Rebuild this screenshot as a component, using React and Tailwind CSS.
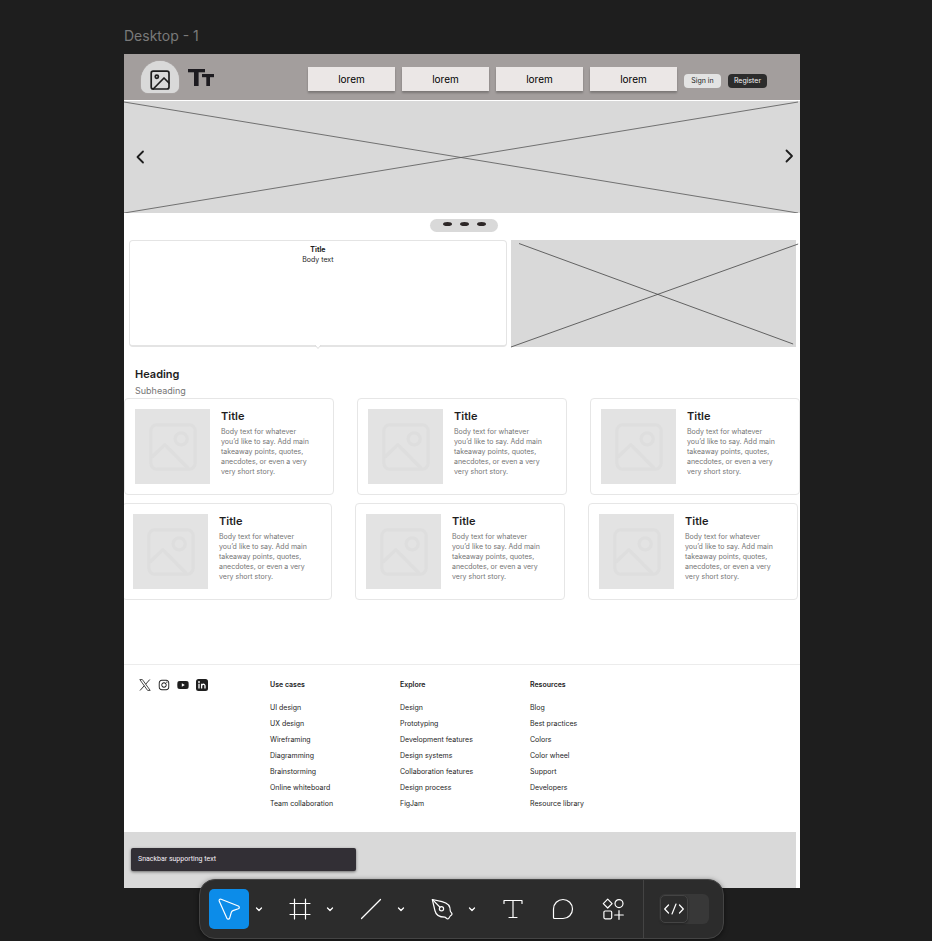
import React from "react";
import { FaInstagram, FaYoutube } from "react-icons/fa6";

const navItems = ["lorem", "lorem", "lorem", "lorem"];

const footerColumns = [
  {
    title: "Use cases",
    links: ["UI design", "UX design", "Wireframing", "Diagramming", "Brainstorming", "Online whiteboard", "Team collaboration"],
  },
  {
    title: "Explore",
    links: ["Design", "Prototyping", "Development features", "Design systems", "Collaboration features", "Design process", "FigJam"],
  },
  {
    title: "Resources",
    links: ["Blog", "Best practices", "Colors", "Color wheel", "Support", "Developers", "Resource library"],
  },
];

function Header() {
  return (
    <header className="flex h-[46px] items-center bg-[#a39e9d] pl-[17px] pr-[33px]">
      <div className="flex h-8 w-[38px] items-end justify-center rounded-t-[19px] rounded-b-[7px] bg-[#d9d9d9] pb-[1px] shadow-[0_0_1px_#d9d9d9]">
        <svg className="size-6" viewBox="0 0 24 24" fill="none" stroke="#1e1e1e" strokeWidth="1.7" strokeLinejoin="round" strokeLinecap="round">
          <rect x="3.2" y="3.2" width="17.8" height="17.8" rx="2" />
          <circle cx="8.8" cy="8.8" r="1.6" />
          <path d="M21 15l-5-5L5.200 21" />
        </svg>
      </div>
      <svg className="ml-[9px] h-[17px] w-[26px]" viewBox="0 0 26 17" fill="#1d1b20">
        <rect x="0" y="0" width="17" height="3.300" />
        <rect x="6" y="0" width="4.600" height="17" />
        <rect x="14" y="5" width="12" height="3.200" />
        <rect x="18.300" y="5" width="3.700" height="12" />
      </svg>
      <nav className="ml-auto mt-1 flex gap-[7px]">
        {navItems.map((label, i) => (
          <a key={i} href="#" className="flex h-6 w-[87px] items-center justify-center bg-[#ebe7e6] text-[10px] text-black shadow-[0_2px_2px_#00000040]">
            {label}
          </a>
        ))}
      </nav>
      <div className="ml-[7px] mt-2 flex gap-[7px]">
        <button className="h-[14px] w-[37px] rounded-[4px] bg-[#e3e3e3] text-[7px] leading-[14px] text-[#1e1e1e]">Sign in</button>
        <button className="h-[14px] w-[39px] rounded-[4px] bg-[#2c2c2c] text-[7px] leading-[14px] text-[#f5f5f5]">Register</button>
      </div>
    </header>
  );
}

function Banner() {
  return (
    <section className="relative mt-px flex h-[112px] items-center justify-between bg-[#d9d9d9] pl-2 pr-1">
      <svg className="absolute inset-0 h-full w-full" viewBox="0 0 676 112" preserveAspectRatio="none" stroke="#555" strokeWidth=".8">
        <path d="M0 1L674 112M0 112L674 1" vectorEffect="non-scaling-stroke" />
      </svg>
      <button aria-label="Previous" className="relative">
        <svg className="size-4" viewBox="0 0 16 16" fill="none" stroke="#1e1e1e" strokeWidth="1.800" strokeLinecap="round" strokeLinejoin="round">
          <path d="M11 2.500L5.500 8l5.500 5.500" />
        </svg>
      </button>
      <button aria-label="Next" className="relative">
        <svg className="size-4" viewBox="0 0 16 16" fill="none" stroke="#1e1e1e" strokeWidth="1.800" strokeLinecap="round" strokeLinejoin="round">
          <path d="M6.500 1.500L12 7L6.500 12.500" />
        </svg>
      </button>
    </section>
  );
}

function Pager() {
  return (
    <div className="flex h-[27px] justify-center pt-[6px] pl-1">
      <div className="flex h-[13px] w-[68px] justify-center gap-2 rounded-[8px] bg-[#d9d9d9] pt-[3px]">
        {[0, 1, 2].map((i) => (
          <span key={i} className="h-1 w-[9px] rounded-[50%] bg-[#2c2626]" />
        ))}
      </div>
    </div>
  );
}

function Feature() {
  return (
    <section className="flex h-[107px] gap-1 pl-[5px] pr-1">
      <div className="relative flex-[377] rounded-[4px] border border-b-2 border-[#e4e4e4] bg-white pt-1 text-center text-[#1e1e1e]">
        <h3 className="text-[7px] leading-[10px] font-bold">Title</h3>
        <p className="text-[7px] leading-[10px]">Body text</p>
        <svg className="absolute top-full left-1/2 h-1 w-2 -translate-x-1/2 overflow-visible" viewBox="0 0 8 4">
          <path d="M1 0L4 3.500L7 0" fill="#fff" stroke="#dedede" />
        </svg>
      </div>
      <div className="flex-[286] bg-[#d9d9d9]">
        <svg className="block h-full w-full overflow-visible" viewBox="0 0 285 107" preserveAspectRatio="none" stroke="#444" strokeWidth=".8">
          <path d="M8 3.500L282 104M0 107L287 4" vectorEffect="non-scaling-stroke" />
        </svg>
      </div>
    </section>
  );
}

function Card() {
  return (
    <article className="flex gap-[11px] rounded-[4px] border border-[#e6e6e6] bg-white py-[10px] pl-[10px]">
      <div className="flex size-[75px] shrink-0 items-center justify-center bg-[#e3e3e3]">
        <svg className="size-[56px]" viewBox="0 0 24 24" fill="none" stroke="#dedede" strokeWidth="1.400" strokeLinejoin="round">
          <rect x="2.500" y="2.500" width="19" height="19" rx="2.500" />
          <circle cx="15.500" cy="8.500" r="2.600" />
          <path d="M2.800 16.500L8.500 11L18.500 21.200" />
        </svg>
      </div>
      <div className="h-[75px] whitespace-nowrap">
        <h3 className="text-[11px] leading-[14px] font-semibold text-[#1e1e1e]">Title</h3>
        <p className="mt-1 text-[7px] leading-[10px] text-[#757575]">
          Body text for whatever<br />
          you’d like to say. Add main<br />
          takeaway points, quotes,<br />
          anecdotes, or even a very<br />
          very short story.
        </p>
      </div>
    </article>
  );
}

function Cards() {
  return (
    <section className="pt-[19px]">
      <h2 className="pl-[11px] text-[11px] leading-4 font-semibold text-[#1e1e1e]">Heading</h2>
      <p className="mt-[2px] pl-[11px] text-[9px] leading-[13px] text-[#757575]">Subheading</p>
      <div className="mt-px grid grid-cols-3 gap-x-[23px]">
        <Card />
        <Card />
        <Card />
      </div>
      <div className="-ml-[2px] mr-[2px] mt-2 grid grid-cols-3 gap-x-[23px]">
        <Card />
        <Card />
        <Card />
      </div>
    </section>
  );
}

function Footer() {
  return (
    <footer className="mt-16 flex h-[168px] border-t border-[#ececec] text-[7px] text-[#1e1e1e]">
      <div className="flex w-[146px] gap-[7px] pl-[15px] pt-[14px]">
        <a href="#" aria-label="X">
          <svg className="size-3" viewBox="0 0 12 12" fill="none" stroke="#1e1e1e">
            <path d="M.8 .6h2.600L11.200 11.400H8.600z" strokeWidth=".8" />
            <path d="M10.800 .5L6.700 5.200M5.300 6.700L1 11.500" strokeWidth=".9" />
          </svg>
        </a>
        <a href="#" aria-label="Instagram"><FaInstagram className="size-3" /></a>
        <a href="#" aria-label="YouTube"><FaYoutube className="size-3" /></a>
        <a href="#" aria-label="LinkedIn">
          <svg className="size-3" viewBox="0 0 12 12">
            <rect x="0" y="0" width="12" height="12" rx="2.500" fill="#1e1e1e" />
            <circle cx="3" cy="3" r=".9" fill="#fff" />
            <path d="M3 4.800V9.500M5.600 9.500V4.800M5.600 7c0-2.200 3.400-2.500 3.400 0V9.500" fill="none" stroke="#fff" strokeWidth="1.300" />
          </svg>
        </a>
      </div>
      {footerColumns.map((col) => (
        <div key={col.title} className="w-[130px] pt-3">
          <h4 className="leading-4 font-semibold">{col.title}</h4>
          <ul className="mt-[7px]">
            {col.links.map((link) => (
              <li key={link} className="leading-4"><a href="#">{link}</a></li>
            ))}
          </ul>
        </div>
      ))}
    </footer>
  );
}

function Chevron({ label }) {
  return (
    <button aria-label={label} className="flex h-10 w-5 items-center justify-center">
      <svg className="size-2" viewBox="0 0 8 8" fill="none" stroke="#fff" strokeWidth="1.300" strokeLinecap="round" strokeLinejoin="round">
        <path d="M1.500 3L4 5.500L6.500 3" />
      </svg>
    </button>
  );
}

function Tool({ label, active, children }) {
  return (
    <button aria-label={label} className={`flex size-10 items-center justify-center rounded-[5px] ${active ? "bg-[#0c8ce9]" : ""}`}>
      <svg className="size-6" viewBox="0 0 24 24" fill="none" stroke="#fff" strokeWidth="1.200" strokeLinecap="round" strokeLinejoin="round">
        {children}
      </svg>
    </button>
  );
}

function Toolbar() {
  return (
    <div className="fixed inset-x-0 bottom-[2px] flex justify-center pr-[10px]">
      <div className="flex h-[60px] items-center rounded-[16px] border border-[#444] bg-[#2c2c2c] pl-[9px] pr-[14px] shadow-[0_1px_5px_#00000080]">
        <div className="flex gap-[11px]">
          <div className="flex">
            <Tool label="Move" active>
              <path d="M2.200 4C1.800 2.700 2.900 1.700 4.100 2.200L21.300 9c1.300.6 1.300 2.200 0 2.700l-5.300 1.900c-.8.300-1.300.8-1.600 1.600l-1.800 6.100c-.4 1.200-2.200 1.200-2.700 0z" />
            </Tool>
            <Chevron label="Move tools" />
          </div>
          <div className="flex">
            <Tool label="Frame">
              <path d="M6.500 2v20M17.500 2v20M2 6.500h20M2 17.500h20" />
            </Tool>
            <Chevron label="Region tools" />
          </div>
          <div className="flex">
            <Tool label="Line">
              <path d="M2.500 21.500L21.500 2.500" />
            </Tool>
            <Chevron label="Shape tools" />
          </div>
          <div className="flex">
            <Tool label="Pen">
              <path d="M2.300 2.500l9.700 2.200c6 1.400 8.500 5 8.300 9.300.1 1.100 1.700 1.900 1.700 3.100 0 1.200-1.200 1.300-2 2.200-.8.800-.9 2.500-2.200 2.700-1.300 0-1.900-1.600-3-1.800C8.500 20.200 5.800 17.500 4.900 13.500z" />
              <circle cx="11.500" cy="11.700" r="2.100" />
              <path d="M2.500 2.700l7.300 7.300" />
            </Tool>
            <Chevron label="Drawing tools" />
          </div>
          <Tool label="Text">
            <path d="M3 6.500V3.500h18v3M12 3.500v17M8 20.500h8" />
          </Tool>
        </div>
        <div className="ml-[10px] flex gap-[10px]">
          <Tool label="Comment">
            <path d="M2.500 12a9.500 9.500 0 1 1 9.500 9.500H3.500a1 1 0 0 1-1-1z" />
          </Tool>
          <Tool label="Actions">
            <path d="M6.700 2.200l4.400 4.400-4.400 4.400-4.400-4.400z" />
            <circle cx="18" cy="6.600" r="4" />
            <rect x="2.900" y="14" width="7.800" height="7.800" rx="1.200" />
            <path d="M18 13.700v8.600M13.700 18h8.600" />
          </Tool>
        </div>
        <div className="ml-[10px] h-full w-px bg-[#444]" />
        <button role="switch" aria-checked="false" aria-label="Dev Mode" className="ml-[15px] h-[30px] w-[50px] rounded-[6px] bg-[#383838] p-px">
          <span className="flex size-7 items-center justify-center rounded-[5px] border border-[#444] bg-[#2c2c2c] shadow-[0_1px_2px_#00000066]">
            <svg className="size-5 shrink-0" viewBox="0 0 20 20" fill="none" stroke="#fff" strokeWidth="1.200" strokeLinecap="round" strokeLinejoin="round">
              <path d="M4.500 6L.7 10l3.800 4M15.500 6l3.800 4-3.800 4M12 5L8 15" />
            </svg>
          </span>
        </button>
      </div>
    </div>
  );
}

export default function App() {
  return (
    <div className="min-h-screen bg-[#1e1e1e] pb-[52px] pl-[124px] pr-[132px] font-['Inter','Liberation_Sans',sans-serif]">
      <h1 className="pt-[26px] text-[14px] leading-5 text-[#7a7a7a]">Desktop - 1</h1>
      <main className="mt-2 overflow-hidden bg-white">
        <Header />
        <Banner />
        <Pager />
        <Feature />
        <Cards />
        <Footer />
        <section className="mr-1 h-14 bg-[#d9d9d9] pl-[7px] pt-4">
          <div role="status" className="h-[23px] w-[225px] rounded-[2px] bg-[#322f35] px-[7px] font-['Roboto',sans-serif] text-[7px] leading-[22px] text-[#f5eff7] shadow-[0_1px_3px_#00000080]">
            Snackbar supporting text
          </div>
        </section>
      </main>
      <Toolbar />
    </div>
  );
}
